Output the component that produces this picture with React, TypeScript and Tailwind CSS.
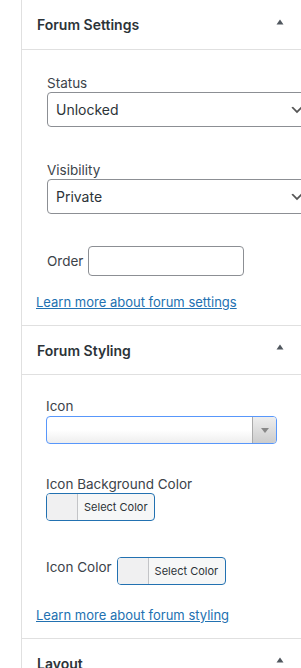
import React from "react";

const font = { fontFamily: "Inter, 'Noto Sans', sans-serif" };

function Caret() {
  return (
    <svg width="8" height="6" viewBox="0 0 8 6" className="fill-[#50575e]">
      <path d="M4 0.5 L7.5 5.5 L0.5 5.5 Z" />
    </svg>
  );
}

function PanelHeader({ title, height }: { title: string; height: string }) {
  return (
    <div
      className={`flex items-center justify-between border-b border-[#e0e0e0] pl-[15px] pr-[17px] ${height}`}
    >
      <span className="text-[14px] font-semibold text-[#2c3338]">{title}</span>
      <span className="-mt-[6px]">
        <Caret />
      </span>
    </div>
  );
}

function WpSelect({ value }: { value: string }) {
  return (
    <div className="relative flex h-[35px] w-[264px] shrink-0 items-center rounded-[4px] border border-[#8c8f94] bg-white pl-[8px] text-[14px] text-[#2c3338]">
      {value}
      <svg
        width="16"
        height="16"
        viewBox="0 0 20 20"
        className="absolute right-[5px] top-1/2 -translate-y-1/2 fill-[#555]"
      >
        <path d="M5 6l5 5 5-5 2 1-7 7-7-7 2-1z" />
      </svg>
    </div>
  );
}

function ColorButton() {
  return (
    <div className="flex h-[28px] w-[109px] overflow-hidden rounded-[4px] border border-[#2271b1] bg-[#f6f7f7]">
      <div className="w-[31px] border-r border-[#c3c4c7] bg-[#f0f0f1]" />
      <div className="flex flex-1 items-center pl-[6px] text-[11px] text-[#2c3338]">
        Select Color
      </div>
    </div>
  );
}

export default function App() {
  return (
    <div
      className="flex h-[668px] w-[301px] overflow-hidden bg-white"
      style={font}
    >
      <div className="w-[21px] shrink-0" />
      <div className="min-w-0 flex-1 border-l border-[#e0e0e0]">
        {/* Forum Settings */}
        <PanelHeader title="Forum Settings" height="h-[50px]" />
        <div className="border-b border-[#e0e0e0] pb-[14px] pl-[14px]">
          <div className="pl-[11px] pt-[24px]">
            <div className="text-[13.5px] leading-[18px] text-[#3c434a]">Status</div>
            <WpSelect value="Unlocked" />
            <div className="mt-[34px] text-[13.5px] leading-[18px] text-[#3c434a]">
              Visibility
            </div>
            <WpSelect value="Private" />
            <div className="mt-[32px] flex items-center gap-[5px]">
              <span className="text-[13.5px] text-[#3c434a]">Order</span>
              <div className="h-[30px] w-[156px] rounded-[4px] border border-[#8c8f94] bg-white" />
            </div>
          </div>
          <a className="mt-[17px] block text-[13px] leading-[18px] text-[#2271b1] underline">
            Learn more about forum settings
          </a>
        </div>

        {/* Forum Styling */}
        <PanelHeader title="Forum Styling" height="h-[49px]" />
        <div className="border-b border-[#e0e0e0] pb-[14px] pl-[14px]">
          <div className="pl-[10px] pt-[22px]">
            <div className="text-[13.5px] leading-[18px] text-[#3c434a]">Icon</div>
            <div className="mt-[1px] flex h-[28px] w-[231px] overflow-hidden rounded-[4px] border border-[#5897fb] bg-gradient-to-b from-white from-50% to-[#eeeeee]">
              <div className="flex-1" />
              <div className="flex w-[24px] items-center justify-center border-l border-[#aaaaaa] bg-gradient-to-b from-[#eeeeee] to-[#cccccc]">
                <svg width="8" height="5" viewBox="0 0 8 5" className="fill-[#888]">
                  <path d="M0 0 L8 0 L4 5 Z" />
                </svg>
              </div>
            </div>
            <div className="mt-[31px] text-[13.5px] leading-[18px] text-[#3c434a]">
              Icon Background Color
            </div>
            <ColorButton />
            <div className="mt-[36px] flex items-start gap-[5px]">
              <span className="mt-[1px] text-[13.5px] leading-[18px] text-[#3c434a]">Icon Color</span>
              <ColorButton />
            </div>
          </div>
          <a className="mt-[21px] block text-[13px] leading-[18px] text-[#2271b1] underline">
            Learn more about forum styling
          </a>
        </div>

        {/* Layout */}
        <PanelHeader title="Layout" height="h-[49px]" />
      </div>
    </div>
  );
}
